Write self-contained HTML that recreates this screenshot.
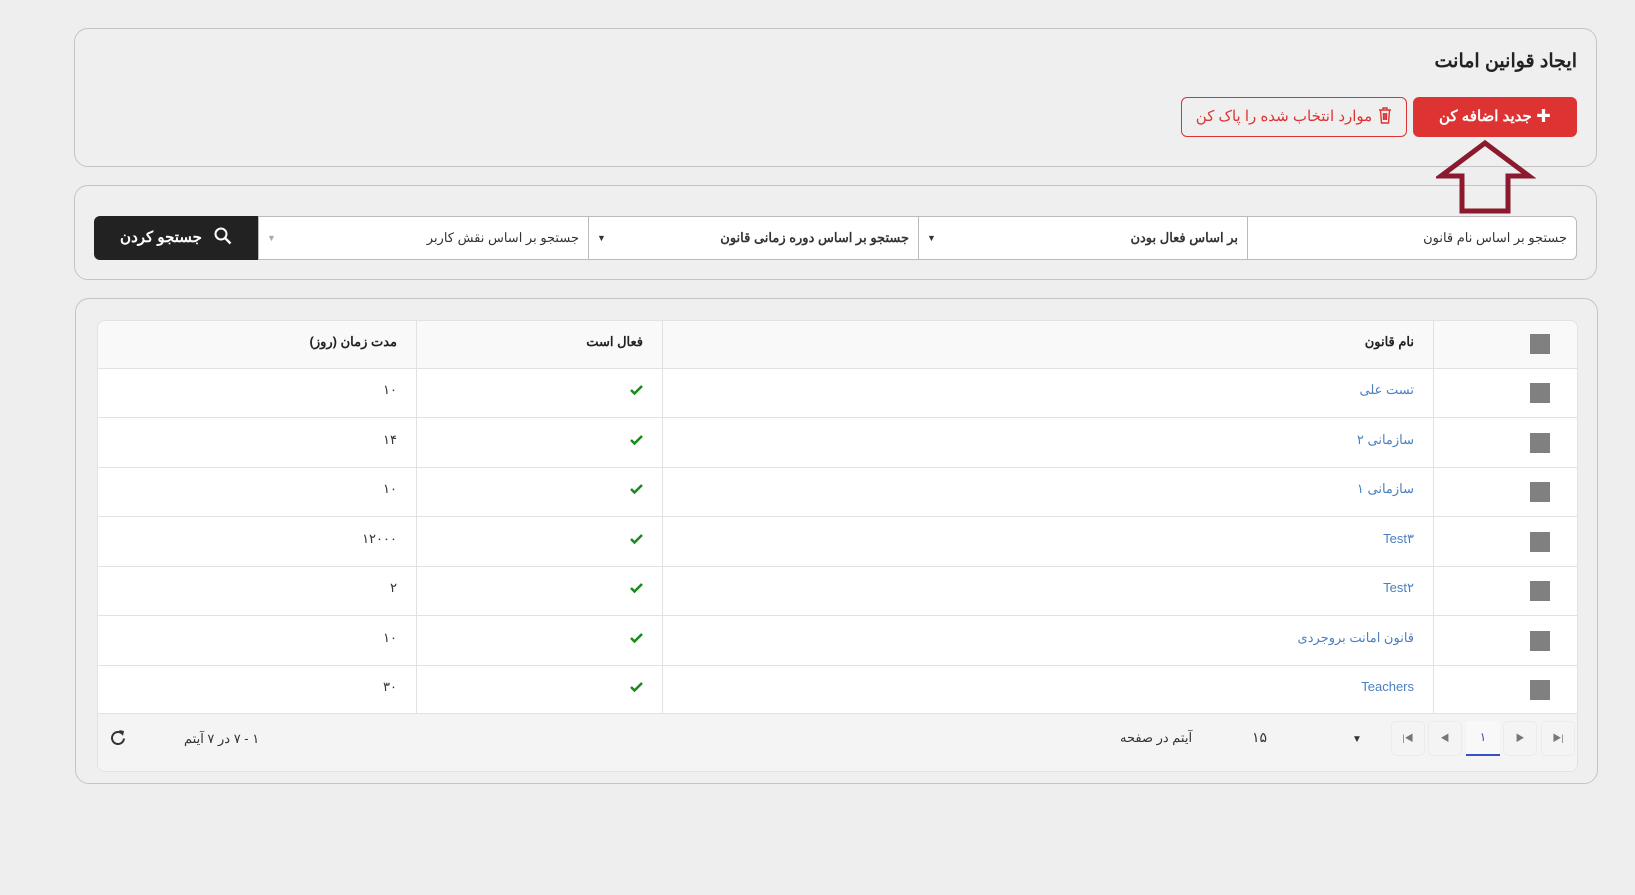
<!DOCTYPE html>
<html><head><meta charset="utf-8"><style>
*{box-sizing:border-box;margin:0;padding:0}
body{width:1635px;height:895px;background:#eeeeee;font-family:"Liberation Sans","Noto Sans CJK SC",sans-serif;position:relative;overflow:hidden;color:#222}
.a{position:absolute}
.card{position:absolute;border:1px solid #c4c4c4;border-radius:14px;background:rgba(240,240,240,.6)}
.t{white-space:nowrap;direction:rtl}
.f{position:absolute;top:216px;height:44px;background:#fff;border:1px solid #bbb;font-size:13px;font-weight:bold;color:#333;direction:rtl;padding:13px 9px 0}
.cb{position:absolute;width:20px;height:20px;background:#808080}
.hl{position:absolute;left:0;right:0;height:1px;background:#e2e2e2}
.vl{position:absolute;top:0;width:1px;height:392px;background:#e2e2e2}
.pb{position:absolute;top:721px;width:34px;height:35px;border:1px solid #ebebeb;border-radius:5px;background:#f4f4f4;color:#777;font-size:9px;text-align:center;line-height:33px}
</style></head><body>
<div class="card" style="left:74px;top:28px;width:1523px;height:139px"></div>
<div class="a t" style="right:58px;top:50px;font-size:19px;font-weight:bold;color:#222">ایجاد قوانین امانت</div>
<div class="a t" style="left:1413px;top:97px;width:164px;height:40px;background:#dd3333;border-radius:6px;color:#fff;font-size:15px;font-weight:bold;text-align:center;line-height:40px">✚ جدید اضافه کن</div>
<div class="a t" style="left:1181px;top:97px;width:226px;height:40px;border:1px solid #d33;border-radius:6px;color:#d33;font-size:15px;text-align:center;line-height:38px"><svg width="14" height="17" viewBox="0 0 14 17" style="vertical-align:-3px;margin-left:6px"><path d="M1 3h12M5 3V1h4v2M2.5 3l1 13h7l1-13M5.5 6v7M7 6v7M8.5 6v7" fill="none" stroke="#d33" stroke-width="1.4"/></svg>موارد انتخاب شده را پاک کن</div>

<div class="card" style="left:74px;top:185px;width:1523px;height:95px"></div>
<svg class="a" style="left:1436px;top:140px;z-index:5" width="100" height="75"><polygon points="49,3 93,36 72,36 72,71 26,71 26,36 5,36" fill="none" stroke="#8b1a2e" stroke-width="5"/></svg>
<div class="f" style="left:1247px;width:330px;border-radius:0 6px 6px 0;font-weight:normal">جستجو بر اساس نام قانون</div>
<div class="f" style="left:918px;width:330px">بر اساس فعال بودن<span class="a" style="left:8px;top:16px;font-size:9px">▼</span></div>
<div class="f" style="left:588px;width:331px">جستجو بر اساس دوره زمانی قانون<span class="a" style="left:8px;top:16px;font-size:9px">▼</span></div>
<div class="f" style="left:258px;width:331px;font-weight:normal">جستجو بر اساس نقش کاربر<span class="a" style="left:8px;top:16px;font-size:9px;color:#aaa">▼</span></div>
<div class="a t" style="left:94px;top:216px;width:164px;height:44px;background:#222;border-radius:6px 0 0 6px;color:#fff;font-size:15px;font-weight:bold;text-align:center;line-height:44px"><svg width="18" height="18" style="vertical-align:-3px;margin-left:12px" viewBox="0 0 18 18"><circle cx="7" cy="7" r="5.5" fill="none" stroke="#fff" stroke-width="2"/><line x1="11" y1="11" x2="16.5" y2="16.5" stroke="#fff" stroke-width="2.3"/></svg>جستجو کردن</div>

<div class="card" style="left:75px;top:298px;width:1523px;height:486px"></div>
<div class="a" style="left:97px;top:320px;width:1481px;height:452px;background:#fff;border-radius:8px;overflow:hidden;border:1px solid #e2e2e2">
 <div class="a" style="left:0;top:0;width:100%;height:47px;background:#f9f9f9"></div>
 <div class="hl" style="top:47px"></div><div class="hl" style="top:96px"></div><div class="hl" style="top:146px"></div><div class="hl" style="top:195px"></div><div class="hl" style="top:245px"></div><div class="hl" style="top:294px"></div><div class="hl" style="top:344px"></div><div class="hl" style="top:392px"></div>
 <div class="vl" style="left:1335px"></div><div class="vl" style="left:564px"></div><div class="vl" style="left:318px"></div>
 <div class="a" style="left:0;top:393px;width:100%;height:60px;background:#f4f4f4"></div>
</div>
<div id="rows"></div>
<div class="cb" style="left:1530px;top:334px"></div>
<div class="a t" style="right:221px;top:334px;font-size:13px;font-weight:bold">نام قانون</div>
<div class="a t" style="right:992px;top:334px;font-size:13px;font-weight:bold">فعال است</div>
<div class="a t" style="right:1238px;top:334px;font-size:13px;font-weight:bold">مدت زمان (روز)</div>
<script>
var n=["تست علی","سازمانی ۲","سازمانی ۱","Test۳","Test۲","قانون امانت بروجردی","Teachers"],d=["۱۰","۱۴","۱۰","۱۲۰۰۰","۲","۱۰","۳۰"],h="";
for(var i=0;i<7;i++){var y=382+i*49.5;
h+='<div class="cb" style="left:1530px;top:'+(y+1)+'px"></div><div class="a t" style="right:221px;top:'+y+'px;font-size:13px;color:#4a7fc1">'+n[i]+'</div><svg class="a" style="left:630px;top:'+(y+3)+'px" width="13" height="10" viewBox="0 0 13 10"><path d="M1 5l3.5 3.5L12 1" fill="none" stroke="#1a8a1a" stroke-width="2.5"/></svg><div class="a t" style="right:1238px;top:'+y+'px;font-size:13px;color:#333">'+d[i]+'</div>';}
document.getElementById('rows').innerHTML=h;
</script>
<svg class="a" style="left:110px;top:729px" width="16" height="17" viewBox="0 0 16 17"><path d="M12.5 5A6 6 0 1 0 14 9.5" fill="none" stroke="#333" stroke-width="2"/><path d="M9 1l5 1-1 5z" fill="#333"/></svg>
<div class="a t" style="left:184px;top:731px;font-size:13px;color:#333">۱ - ۷ در ۷ آیتم</div>
<div class="a t" style="left:1120px;top:730px;font-size:13px;color:#333">آیتم در صفحه</div>
<div class="a" style="left:1252px;top:729px;font-size:14px;color:#333">۱۵</div>
<div class="a" style="left:1352px;top:734px;font-size:10px;color:#333">▼</div>
<div class="pb" style="left:1391px">|◀</div><div class="pb" style="left:1428px">◀</div>
<div class="pb" style="left:1466px;border:none;background:#f8f8f8;color:#3a4fc0;border-bottom:2px solid #3a4fc0;border-radius:0;font-size:12px">۱</div>
<div class="pb" style="left:1503px">▶</div><div class="pb" style="left:1541px">▶|</div>
</body></html>
